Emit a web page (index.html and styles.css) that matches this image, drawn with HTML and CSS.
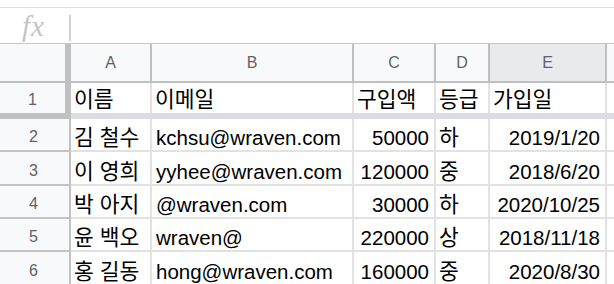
FILE: index.html
```html
<!DOCTYPE html>
<html lang="ko">
<head>
<meta charset="utf-8">
<title>Sheet</title>
<link rel="stylesheet" href="styles.css">
</head>
<body>
<div class="formula">
  <span class="fx">fx</span>
  <span class="fsep"></span>
</div>
<div class="sheet">
  <div class="row head">
    <div class="corner"></div>
    <div class="ch">A</div>
    <div class="ch">B</div>
    <div class="ch">C</div>
    <div class="ch">D</div>
    <div class="ch sel">E</div>
    <div class="ch last"></div>
  </div>
  <div class="row first">
    <div class="rh fz">1</div>
    <div class="c ko">이름</div>
    <div class="c ko">이메일</div>
    <div class="c ko">구입액</div>
    <div class="c ko">등급</div>
    <div class="c ko">가입일</div>
    <div class="c last"></div>
  </div>
  <div class="band"><div class="band-l"></div><div class="band-r"></div></div>
  <div class="row data">
    <div class="rh">2</div>
    <div class="c ko">김 철수</div>
    <div class="c">kchsu@wraven.com</div>
    <div class="c num">50000</div>
    <div class="c ko">하</div>
    <div class="c num">2019/1/20</div>
    <div class="c last"></div>
  </div>
  <div class="row data">
    <div class="rh">3</div>
    <div class="c ko">이 영희</div>
    <div class="c">yyhee@wraven.com</div>
    <div class="c num">120000</div>
    <div class="c ko">중</div>
    <div class="c num">2018/6/20</div>
    <div class="c last"></div>
  </div>
  <div class="row data">
    <div class="rh">4</div>
    <div class="c ko">박 아지</div>
    <div class="c">@wraven.com</div>
    <div class="c num">30000</div>
    <div class="c ko">하</div>
    <div class="c num">2020/10/25</div>
    <div class="c last"></div>
  </div>
  <div class="row data">
    <div class="rh">5</div>
    <div class="c ko">윤 백오</div>
    <div class="c">wraven@</div>
    <div class="c num">220000</div>
    <div class="c ko">상</div>
    <div class="c num">2018/11/18</div>
    <div class="c last"></div>
  </div>
  <div class="row data">
    <div class="rh">6</div>
    <div class="c ko">홍 길동</div>
    <div class="c">hong@wraven.com</div>
    <div class="c num">160000</div>
    <div class="c ko">중</div>
    <div class="c num">2020/8/30</div>
    <div class="c last"></div>
  </div>
</div>
</body>
</html>
```
FILE: styles.css
```css
html, body {
  margin: 0;
  padding: 0;
  background: #ffffff;
  overflow: hidden;
}
body {
  font-family: "Liberation Sans", "Noto Sans CJK KR", Arial, sans-serif;
  width: 614px;
  height: 284px;
}
.formula {
  margin-top: 7px;
  height: 35px;
  border-top: 1px solid #e0e0e0;
  border-bottom: 1px solid #c7c7c7;
  display: flex;
  align-items: center;
}
.fx {
  font-family: "Liberation Serif", "DejaVu Serif", serif;
  font-style: italic;
  font-size: 29px;
  line-height: 30px;
  color: #c4c4c4;
  padding-left: 22px;
  letter-spacing: 1px;
  width: 48px;
  box-sizing: border-box;
}
.fsep {
  width: 2px;
  height: 26px;
  background: #d0d0d0;
  margin-left: 21px;
  margin-top: 4px;
}
.sheet {
  display: flex;
  flex-direction: column;
}
.row {
  display: grid;
  grid-template-columns: 71px 81px 202px 82px 54px 117px 1fr;
}
.head {
  height: 39px;
}
.corner {
  background: #f8f9fa;
  border-right: 6px solid #c0c0c0;
  border-bottom: 2px solid #c0c0c0;
}
.ch {
  background: #f8f9fa;
  border-right: 2px solid #c0c0c0;
  border-bottom: 2px solid #c0c0c0;
  color: #5f6368;
  font-size: 16px;
  line-height: 18px;
  display: flex;
  align-items: center;
  justify-content: center;
  padding-top: 1px;
}
.ch.sel {
  background: #e8eaed;
}
.ch.last {
  border-right: none;
}
.first {
  height: 30px;
}
.data {
  height: 33.33px;
}
.rh {
  background: #f8f9fa;
  color: #5f6368;
  font-size: 16px;
  line-height: 18px;
  display: flex;
  align-items: flex-end;
  justify-content: center;
  padding-bottom: 4px;
  border-right: 2px solid #c0c0c0;
  border-bottom: 2px solid #c4c4c4;
  padding-right: 2px;
}
.rh.fz {
  border-right-width: 6px;
  border-bottom: none;
  padding-right: 0;
}
.c {
  font-size: 20.5px;
  line-height: 22px;
  color: #000000;
  display: flex;
  align-items: flex-end;
  padding: 0 4px 1px 4px;
  border-right: 2px solid #e2e2e2;
  border-bottom: 2px solid #e2e2e2;
  white-space: nowrap;
  overflow: hidden;
}
.c.ko {
  font-size: 21.5px;
  padding-left: 3px;
}
.first .c {
  border-bottom: none;
  padding-bottom: 2px;
}
.c.num {
  justify-content: flex-end;
  padding-right: 5px;
}
.c.last {
  border-right: none;
}
.band {
  display: grid;
  grid-template-columns: 71px 1fr;
  height: 6px;
}
.band-l {
  background: #c0c0c0;
}
.band-r {
  background: #dadee4;
}
```
